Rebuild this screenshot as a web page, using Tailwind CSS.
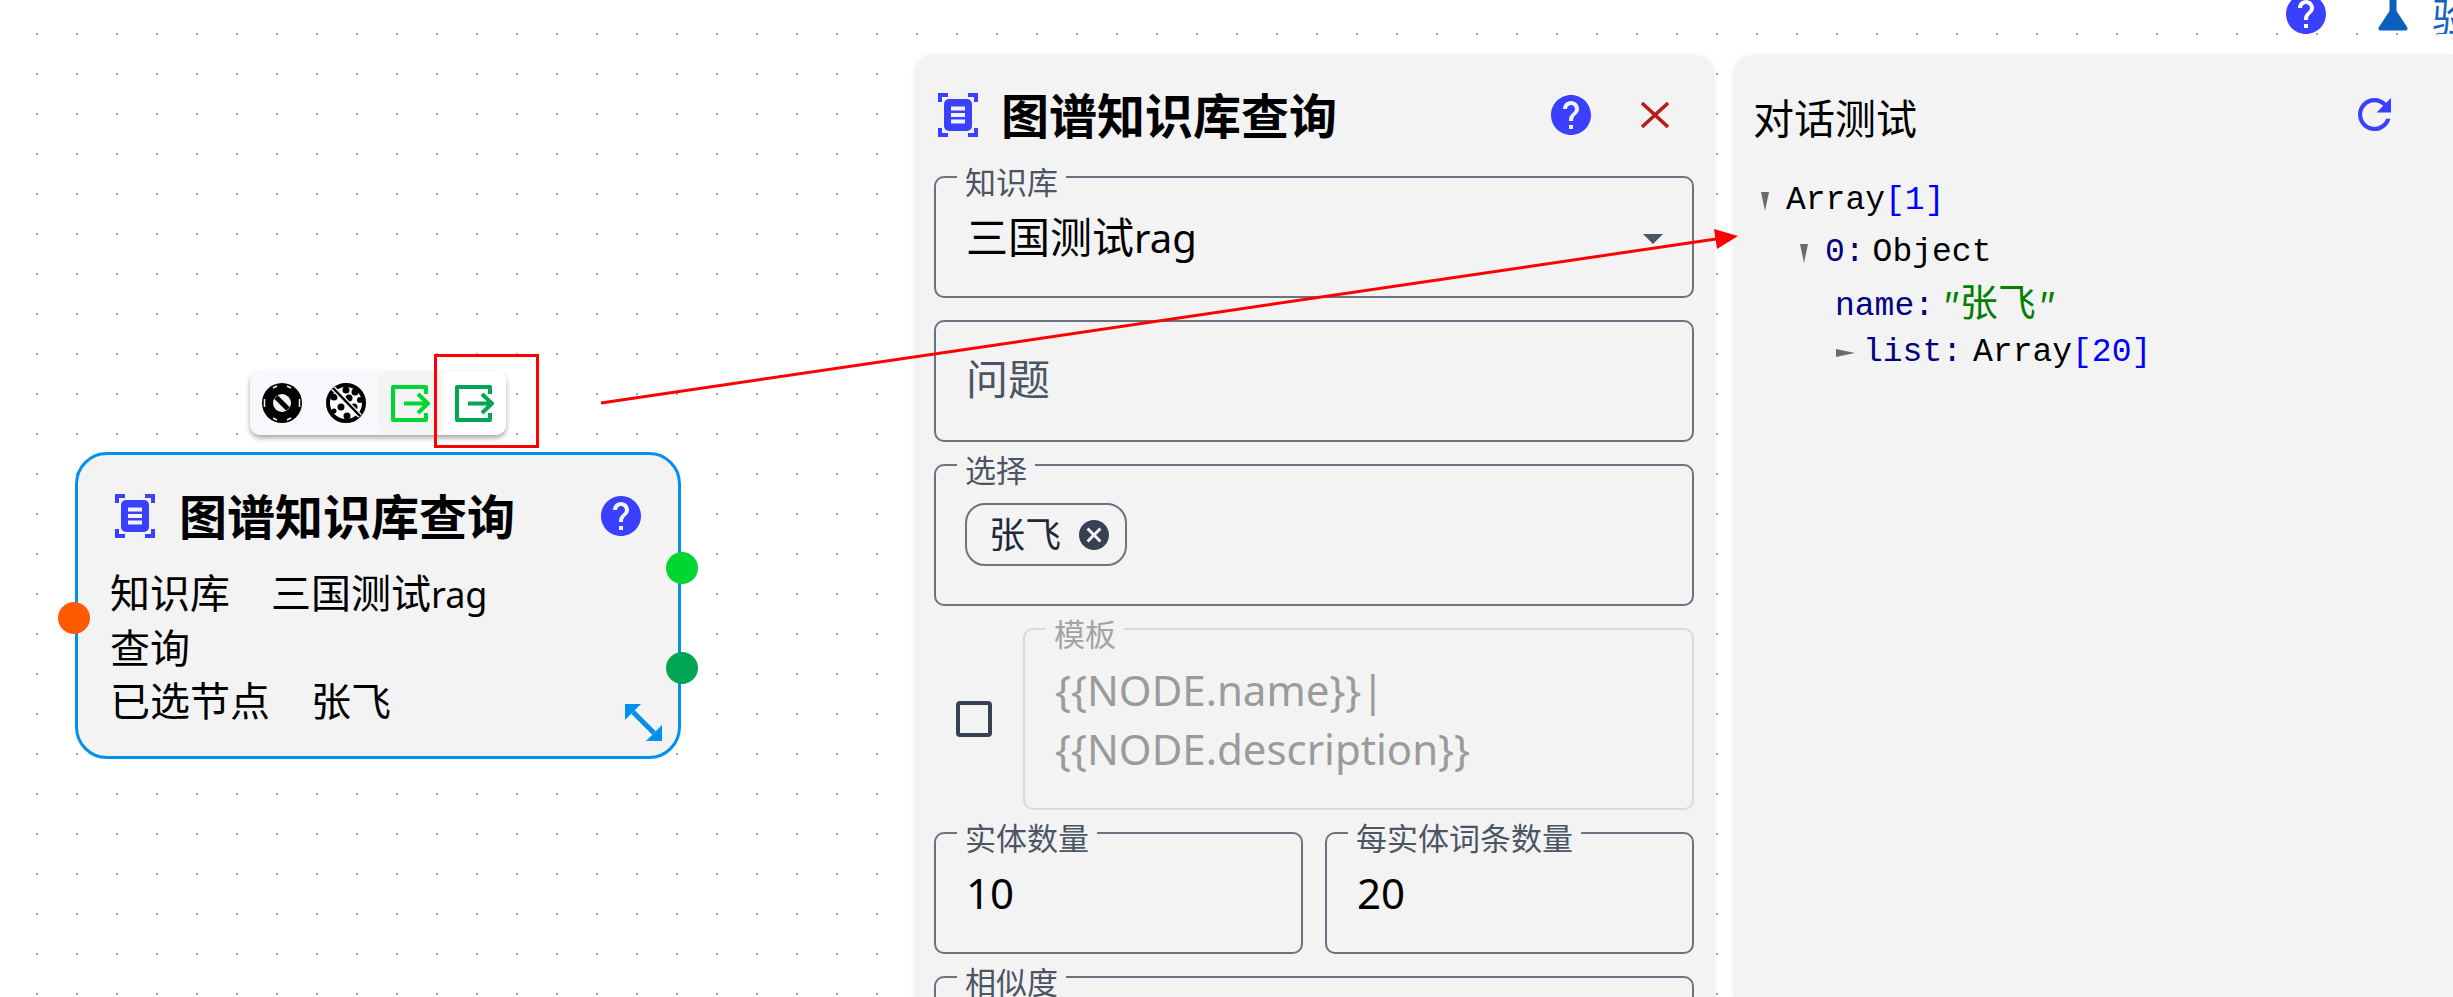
<!DOCTYPE html>
<html lang="zh-CN">
<head>
  <meta charset="UTF-8" />
  <title>图谱知识库查询</title>
  <script src="https://cdn.jsdelivr.net/npm/@tailwindcss/browser@4"></script>
</head>
<body class="bg-white font-['Noto_Sans','Noto_Sans_CJK_SC',sans-serif] text-black">
  <div class="relative h-[997px] w-[2453px] overflow-hidden bg-white bg-[radial-gradient(circle,#a3a3a3_1px,transparent_1.5px)] bg-[size:40px_40px] bg-[position:17px_14px]">

    <!-- top bar -->
    <div class="flex h-[55px] items-start justify-end">
      <svg class="mt-[-6px] h-[40px] w-[40px] text-[#3b3fff]" viewBox="2 2 20 20" fill="currentColor"><path d="M12 2C6.48 2 2 6.48 2 12s4.48 10 10 10 10-4.48 10-10S17.52 2 12 2zm1 17h-2v-2h2v2zm2.07-7.75l-.9.92C13.45 12.9 13 13.5 13 15h-2v-.5c0-1.1.45-2.1 1.17-2.83l1.24-1.26c.37-.36.59-.86.59-1.41 0-1.1-.9-2-2-2s-2 .9-2 2H8c0-2.21 1.79-4 4-4s4 1.79 4 4c0 .88-.36 1.68-.93 2.25z"/></svg>
      <svg class="ml-[52px] h-[31px] w-[30px] text-[#0a5fbf]" viewBox="0 0 30 31" fill="currentColor"><path d="M11.500 0h7v11l10.500 16c1.200 2 .2 3.500-1.500 3.500h-25C.8 30.500-.2 29 1 27l10.500-16z"/></svg>
      <div class="ml-[24px] w-[21px] overflow-hidden whitespace-nowrap text-[40px] leading-[34px] text-[#1565c0]">验证</div>
    </div>

    <!-- panels -->
    <div class="ml-[914px] flex h-[942px] gap-[18px]">
      <div class="w-[801px] shrink-0 rounded-t-[20px] bg-[#f3f3f3] pl-[20px] pr-[21px] shadow-[0_0_6px_rgba(0,0,0,0.06)]">
        <div class="flex h-[121px] items-start pt-[38px]">
          <svg class="ml-[4px] h-[44px] w-[40px] text-[#3b3fff]" viewBox="0 0 40 44" fill="none"><path d="M10 2H2v7M30 2h8v7M10 42H2v-7M30 42h8v-7" stroke="currentColor" stroke-width="4"/><rect x="6" y="6" width="28" height="32" rx="5" fill="currentColor"/><path d="M13 15.500h14M13 22h14M13 28.500h14" stroke="#f3f3f3" stroke-width="4"/></svg>
          <div class="ml-[23px] text-[48px] font-bold leading-[46px]">图谱知识库查询</div>
          <svg class="ml-auto mt-[2px] h-[40px] w-[40px] text-[#3b3fff]" viewBox="2 2 20 20" fill="currentColor"><path d="M12 2C6.48 2 2 6.48 2 12s4.48 10 10 10 10-4.48 10-10S17.52 2 12 2zm1 17h-2v-2h2v2zm2.07-7.75l-.9.92C13.45 12.9 13 13.5 13 15h-2v-.5c0-1.1.45-2.1 1.17-2.83l1.24-1.26c.37-.36.59-.86.59-1.41 0-1.1-.9-2-2-2s-2 .9-2 2H8c0-2.21 1.79-4 4-4s4 1.79 4 4c0 .88-.36 1.68-.93 2.25z"/></svg>
          <svg class="ml-[50px] mr-[25px] mt-[9px] h-[26px] w-[28px] text-[#b91c1c]" viewBox="0 0 28 26" fill="none" stroke="currentColor" stroke-width="3.500"><path d="M1 1l26 24M27 1L1 25"/></svg>
        </div>

        <div class="flex flex-col gap-[22px]">
          <div class="relative h-[122px] rounded-[10px] border-2 border-[#6b7280]">
            <span class="absolute left-[21px] top-[-16px] bg-[linear-gradient(transparent_14px,#f3f3f3_14px)] px-2 text-[31px] leading-[40px] text-[#4b5563]">知识库</span>
            <div class="pl-[30px] pt-[34px] text-[42px] leading-[50px]">三国测试<span class="text-[40px]">rag</span></div>
            <div class="absolute right-[29px] top-[56px] h-0 w-0 border-x-[10px] border-t-[10px] border-x-transparent border-t-[#4b5563]"></div>
          </div>

          <div class="h-[122px] rounded-[10px] border-2 border-[#6b7280] pl-[30px] pt-[32px] text-[42px] leading-[50px] text-[#4b5563]">问题</div>

          <div class="relative h-[142px] rounded-[10px] border-2 border-[#6b7280]">
            <span class="absolute left-[21px] top-[-16px] bg-[linear-gradient(transparent_14px,#f3f3f3_14px)] px-2 text-[31px] leading-[40px] text-[#4b5563]">选择</span>
            <div class="ml-[29px] mt-[37px] flex h-[63px] w-[162px] items-center rounded-[20px] border-2 border-[#6b7280] pl-[22px]">
              <span class="text-[36px] leading-[50px] text-[#1f2937]">张飞</span>
              <svg class="ml-[18px] h-[30px] w-[30px] text-[#374151]" viewBox="2 2 20 20" fill="currentColor"><path d="M12 2C6.47 2 2 6.47 2 12s4.47 10 10 10 10-4.47 10-10S17.53 2 12 2zm5 13.59L15.59 17 12 13.41 8.41 17 7 15.59 10.59 12 7 8.41 8.41 7 12 10.59 15.59 7 17 8.41 13.41 12 17 15.59z"/></svg>
            </div>
          </div>

          <div class="flex items-center">
            <div class="ml-[22px] h-[36px] w-[36px] shrink-0 rounded-[4px] border-[4px] border-[#374151]"></div>
            <div class="relative ml-[31px] h-[182px] flex-1 rounded-[10px] border-2 border-[#d9d9d9] pl-[30px] pt-[30px] text-[42px] leading-[59px] text-[#9b9b9b]">
              <span class="absolute left-[21px] top-[-16px] bg-[linear-gradient(transparent_14px,#f3f3f3_14px)] px-2 text-[31px] leading-[40px] text-[#a3a3a3]">模板</span>
              <div>{{NODE.name}}|</div>
              <div>{{NODE.description}}</div>
            </div>
          </div>

          <div class="flex gap-[22px]">
            <div class="relative h-[122px] flex-1 rounded-[10px] border-2 border-[#6b7280] pl-[30px] pt-[34px] text-[42px] leading-[50px]">
              <span class="absolute left-[21px] top-[-16px] bg-[linear-gradient(transparent_14px,#f3f3f3_14px)] px-2 text-[31px] leading-[40px] text-[#4b5563]">实体数量</span>
              10
            </div>
            <div class="relative h-[122px] flex-1 rounded-[10px] border-2 border-[#6b7280] pl-[30px] pt-[34px] text-[42px] leading-[50px]">
              <span class="absolute left-[21px] top-[-16px] bg-[linear-gradient(transparent_14px,#f3f3f3_14px)] px-2 text-[31px] leading-[40px] text-[#4b5563]">每实体词条数量</span>
              20
            </div>
          </div>

          <div class="relative h-[122px] rounded-[10px] border-2 border-[#6b7280]">
            <span class="absolute left-[21px] top-[-16px] bg-[linear-gradient(transparent_14px,#f3f3f3_14px)] px-2 text-[31px] leading-[40px] text-[#4b5563]">相似度</span>
          </div>
        </div>
      </div>

      <div class="flex-1 rounded-tl-[20px] bg-[#f3f3f3] pl-[20px] shadow-[0_0_6px_rgba(0,0,0,0.06)]">
        <div class="flex h-[120px] items-start pt-[33px]">
          <div class="text-[41px] leading-[60px]">对话测试</div>
          <svg class="ml-[441px] mt-[10px] h-[33px] w-[33px] text-[#3b3fff]" viewBox="4 4 16 16" fill="currentColor"><path d="M17.65 6.35A7.958 7.958 0 0 0 12 4c-4.42 0-7.99 3.58-7.99 8s3.57 8 7.99 8c3.73 0 6.84-2.55 7.73-6h-2.08A5.99 5.99 0 0 1 12 18c-3.31 0-6-2.69-6-6s2.69-6 6-6c1.66 0 3.14.69 4.22 1.78L13 11h7V4l-2.35 2.35z"/></svg>
        </div>
        <div class="font-['Liberation_Mono','Noto_Sans_CJK_SC',monospace] text-[33px] leading-[52px]">
          <div class="flex h-[52px] items-center pl-[8px]">
            <div class="h-0 w-0 border-x-[4.500px] border-t-[19px] border-x-transparent border-t-[#6b6b6b]"></div>
            <span class="ml-[17px]">Array</span><span class="text-[#0000ff]">[1]</span>
          </div>
          <div class="flex h-[52px] items-center pl-[47px]">
            <div class="h-0 w-0 border-x-[4.500px] border-t-[19px] border-x-transparent border-t-[#6b6b6b]"></div>
            <span class="ml-[17px] text-[#000080]">0:</span><span class="ml-[8px]">Object</span>
          </div>
          <div class="flex h-[52px] items-center pl-[82px] pt-[3px]">
            <span class="text-[#000080]">name:</span><span class="ml-[6px] text-[#008000]"><span class="italic">"</span><span class="text-[38px]">张飞</span><span class="italic">"</span></span>
          </div>
          <div class="flex h-[44px] items-center pl-[83px]">
            <div class="h-0 w-0 border-y-[4.500px] border-l-[19px] border-y-transparent border-l-[#6b6b6b]"></div>
            <span class="ml-[8px] text-[#000080]">list:</span><span class="ml-[11px]">Array</span><span class="text-[#0000ff]">[20]</span>
          </div>
        </div>
      </div>
    </div>

    <!-- node on the canvas -->
    <div class="absolute left-[250px] top-[371px] flex h-[64px] w-[256px] rounded-[10px] bg-[#f9f9fd] shadow-[0_3px_5px_rgba(0,0,0,0.35)]">
      <div class="flex w-[64px] items-center justify-center">
        <svg class="h-[40px] w-[40px]" viewBox="0 0 40 40"><circle cx="20" cy="20" r="20" fill="#000"/><g stroke="#f3f3f3" stroke-width="1.500" fill="none"><path d="M2.500 16v8M37.500 16v8M11 5l4-2M25 3l4 2M11 35l4 2M25 37l4-2"/></g><circle cx="20" cy="20" r="9" fill="#f3f3f3"/><path d="M14 14l12 12" stroke="#000" stroke-width="5"/></svg>
      </div>
      <div class="flex w-[64px] items-center justify-center">
        <svg class="h-[40px] w-[40px]" viewBox="0 0 40 40"><circle cx="20" cy="20" r="18" fill="#fff" stroke="#000" stroke-width="4"/><g fill="#000"><circle cx="20" cy="7" r="3.500"/><circle cx="29" cy="9" r="3.500"/><circle cx="34" cy="17" r="3"/><circle cx="8" cy="14" r="3.500"/><circle cx="23" cy="15" r="3.500"/><circle cx="28" cy="24" r="3.500"/><circle cx="15" cy="24" r="3.500"/><circle cx="21" cy="33" r="3.500"/><circle cx="8" cy="28" r="2.500"/></g><path d="M7 5l27 28" stroke="#f9f9fd" stroke-width="5"/><path d="M7 5l27 28" stroke="#000" stroke-width="2.500"/></svg>
      </div>
      <div class="flex w-[64px] items-center justify-center rounded-[10px] bg-[#f4f4f4]">
        <svg class="ml-[1px] h-[37px] w-[39px] text-[#00d632]" viewBox="0 0 39 37" fill="none" stroke="currentColor" stroke-width="4"><path d="M35 9V2H2v33h33v-7" stroke-linejoin="round"/><path d="M13 18.500h24M27 9l10 9.500L27 28"/></svg>
      </div>
      <div class="flex w-[64px] items-center justify-center rounded-[10px] bg-white">
        <svg class="ml-[1px] h-[37px] w-[39px] text-[#00a651]" viewBox="0 0 39 37" fill="none" stroke="currentColor" stroke-width="4"><path d="M35 9V2H2v33h33v-7" stroke-linejoin="round"/><path d="M13 18.500h24M27 9l10 9.500L27 28"/></svg>
      </div>
    </div>

    <div class="absolute left-[75px] top-[452px] h-[307px] w-[606px] rounded-[32px] border-[3px] border-[#0091f0] bg-[#f3f3f3] pl-[32px]">
      <div class="flex h-[88px] items-start pt-[39px]">
        <svg class="ml-[5px] h-[44px] w-[40px] text-[#3b3fff]" viewBox="0 0 40 44" fill="none"><path d="M10 2H2v7M30 2h8v7M10 42H2v-7M30 42h8v-7" stroke="currentColor" stroke-width="4"/><rect x="6" y="6" width="28" height="32" rx="5" fill="currentColor"/><path d="M13 15.500h14M13 22h14M13 28.500h14" stroke="#f3f3f3" stroke-width="4"/></svg>
        <div class="ml-[24px] text-[48px] font-bold leading-[46px]">图谱知识库查询</div>
        <svg class="ml-[86px] mt-[2px] h-[40px] w-[40px] text-[#3b3fff]" viewBox="2 2 20 20" fill="currentColor"><path d="M12 2C6.48 2 2 6.48 2 12s4.48 10 10 10 10-4.48 10-10S17.52 2 12 2zm1 17h-2v-2h2v2zm2.07-7.75l-.9.92C13.45 12.9 13 13.5 13 15h-2v-.5c0-1.1.45-2.1 1.17-2.83l1.24-1.26c.37-.36.59-.86.59-1.41 0-1.1-.9-2-2-2s-2 .9-2 2H8c0-2.21 1.79-4 4-4s4 1.79 4 4c0 .88-.36 1.68-.93 2.25z"/></svg>
      </div>
      <div class="pt-[23px] text-[40px] leading-[53px]">
        <div class="flex gap-[41px]"><span>知识库</span><span>三国测试<span class="text-[36px]">rag</span></span></div>
        <div>查询</div>
        <div class="flex gap-[41px]"><span>已选节点</span><span>张飞</span></div>
      </div>
      <svg class="absolute bottom-[15px] right-[16px] h-[37px] w-[37px] text-[#0091f0]" viewBox="0 0 37 37" fill="currentColor"><path d="M0 0h16L0 16zM37 37H21l16-16z"/><path d="M8 8l21 21" stroke="currentColor" stroke-width="5"/></svg>
    </div>
    <div class="absolute left-[58px] top-[602px] h-[32px] w-[32px] rounded-full bg-[#ff5a00]"></div>
    <div class="absolute left-[666px] top-[552px] h-[32px] w-[32px] rounded-full bg-[#00d632]"></div>
    <div class="absolute left-[666px] top-[652px] h-[32px] w-[32px] rounded-full bg-[#00a651]"></div>

    <!-- red annotation -->
    <svg class="pointer-events-none absolute inset-0" width="2453" height="997" fill="none">
      <rect x="435.500" y="355.500" width="102" height="91" stroke="#ff0000" stroke-width="3"/>
      <path d="M601 403L1716 239" stroke="#ff0000" stroke-width="3"/>
      <path d="M1738 236L1714 229L1717 249z" fill="#ff0000"/>
    </svg>
  </div>
</body>
</html>
